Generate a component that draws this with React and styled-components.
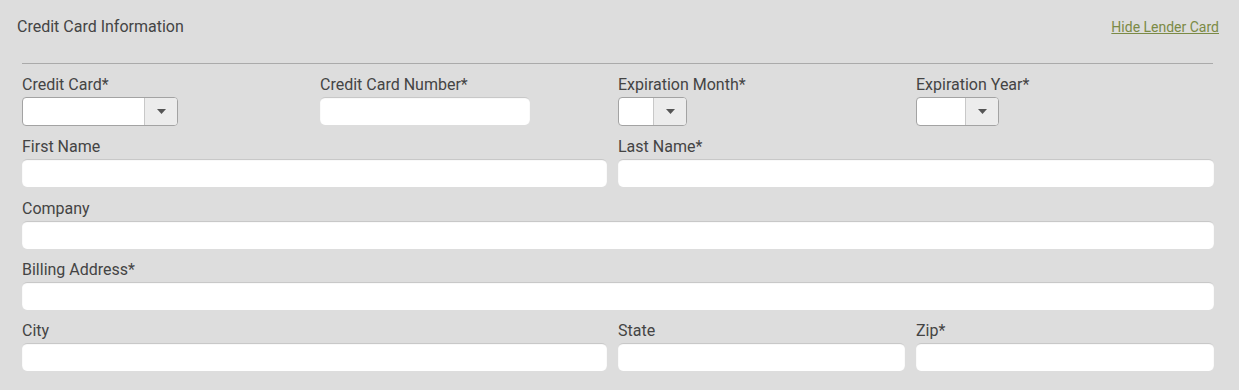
import React from 'react'
import styled, { createGlobalStyle } from 'styled-components'

const GlobalStyle = createGlobalStyle`
  body {
    margin: 0;
    background: #dddddd;
    font-family: "Roboto", "Liberation Sans", sans-serif;
  }
`

function SelectBox({ width }) {
  return (
    <Select $width={width}>
      <SelectValue />
      <Caret>
        <svg width="9" height="5" viewBox="0 0 9 5">
          <path d="M0 0 L9 0 L4.5 5 Z" fill="#555" />
        </svg>
      </Caret>
    </Select>
  )
}

function App() {
  return (
    <>
      <GlobalStyle />
      <Panel>
        <Header>
          <Title>Credit Card Information</Title>
          <HideLink href="#">Hide Lender Card</HideLink>
        </Header>
        <Divider />
        <Grid>
          <Field>
            <Label>Credit Card*</Label>
            <SelectBox width={156} />
          </Field>
          <Field>
            <Label>Credit Card Number*</Label>
            <Input $width="210px" />
          </Field>
          <Field>
            <Label>Expiration Month*</Label>
            <SelectBox width={69} />
          </Field>
          <Field $last>
            <Label>Expiration Year*</Label>
            <SelectBox width={83} />
          </Field>

          <Field $span={2}>
            <Label>First Name</Label>
            <Input />
          </Field>
          <Field $span={2} $last>
            <Label>Last Name*</Label>
            <Input />
          </Field>

          <Field $span={4} $last>
            <Label>Company</Label>
            <Input />
          </Field>

          <Field $span={4} $last>
            <Label>Billing Address*</Label>
            <Input />
          </Field>

          <Field $span={2}>
            <Label>City</Label>
            <Input />
          </Field>
          <Field>
            <Label>State</Label>
            <Input />
          </Field>
          <Field $last>
            <Label>Zip*</Label>
            <Input />
          </Field>
        </Grid>
      </Panel>
    </>
  )
}

export default App

const Panel = styled.div`
  width: 1239px;
  height: 390px;
  box-sizing: border-box;
  padding: 17px 20px 0 17px;
  color: #444;
`

const Header = styled.div`
  display: flex;
  justify-content: space-between;
  align-items: baseline;
  height: 30px;
`

const Title = styled.div`
  font-size: 16px;
  color: #444;
`

const HideLink = styled.a`
  font-size: 14px;
  color: #7b8a45;
  text-decoration: underline;
`

const Divider = styled.hr`
  border: none;
  border-top: 1px solid #aaa;
  margin: 16px 6px 0 5px;
`

const Grid = styled.div`
  display: grid;
  grid-template-columns: repeat(4, 298px);
  row-gap: 11.3px;
  margin: 11px 0 0 5px;
`

const Field = styled.div`
  grid-column: span ${(p) => p.$span || 1};
  display: flex;
  flex-direction: column;
  padding-right: ${(p) => (p.$last ? 0 : 11)}px;
`

const Label = styled.label`
  font-size: 16px;
  line-height: 20px;
  color: #444;
  margin-bottom: 2px;
`

const Input = styled.div`
  width: ${(p) => p.$width || '100%'};
  height: 28px;
  box-sizing: border-box;
  background: #fff;
  border-radius: 5px;
  box-shadow: inset 0 2px 1px -1px #c2c2c2, inset 1px 0 1px -1px #ccc,
    inset -1px 0 1px -1px #ccc;
`

const Select = styled.div`
  display: flex;
  width: ${(p) => p.$width}px;
  height: 29px;
  box-sizing: border-box;
  border: 1px solid #a3a3a3;
  border-radius: 4px;
  overflow: hidden;
  background: #fff;
`

const SelectValue = styled.div`
  flex: 1;
`

const Caret = styled.div`
  width: 32px;
  display: flex;
  align-items: center;
  justify-content: center;
  background: #ececec;
  border-left: 1px solid #c8c8c8;
`
